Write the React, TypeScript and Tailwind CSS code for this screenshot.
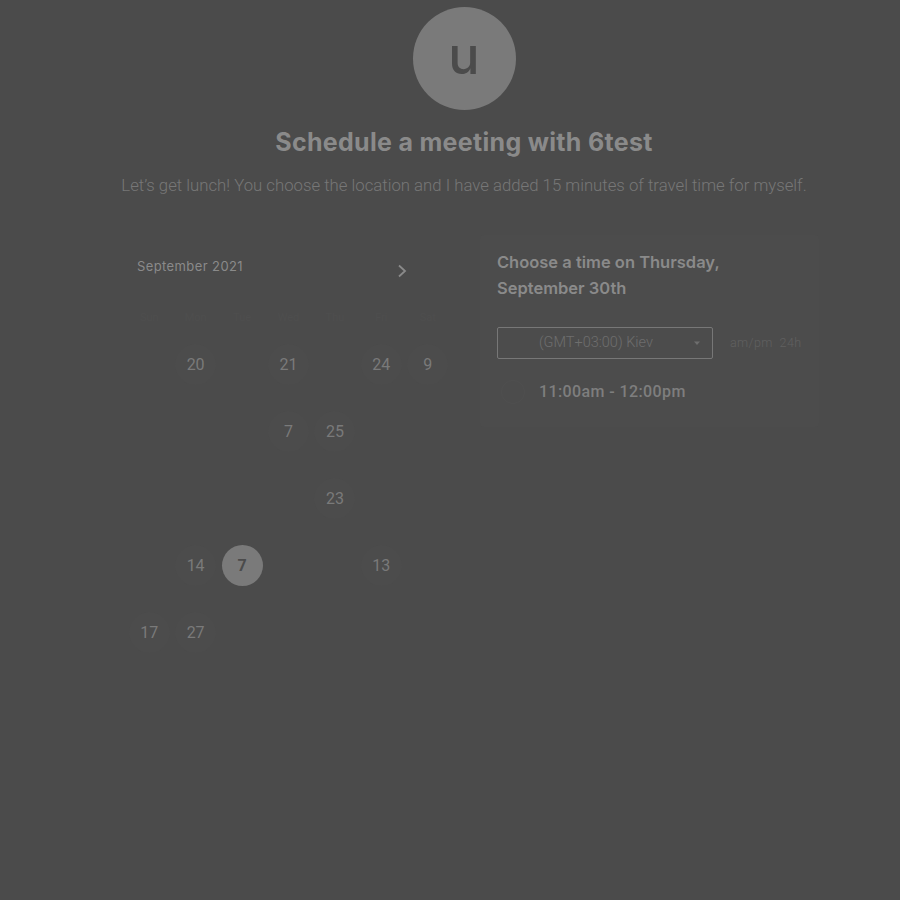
const cells: (string | null)[][] = [
  [null, "20", null, "21", null, "24", "9"],
  [null, null, null, "7", "25", null, null],
  [null, null, null, null, "23", null, null],
  [null, "14", "sel", null, null, "13", null],
  ["17", "27", null, null, null, null, null],
];

const days = ["Sun", "Mon", "Tue", "Wed", "Thu", "Fri", "Sat"];

const App = () => {
  return (
    <div className="min-h-[900px] w-full bg-[#4b4b4b] flex flex-col items-center pl-[28px] font-['Roboto',sans-serif]">
      <div className="mt-[7px] w-[103px] h-[103px] rounded-full bg-[#7a7a7a] flex items-center justify-center">
        <span className="text-[52px] font-medium leading-none -mt-[6px] text-[#4b4b4b] font-['Inter',sans-serif]">u</span>
      </div>
      <h1 className="mt-[16px] text-[25px] leading-[32px] font-bold tracking-[0.3px] text-[#8a8a8a] font-['Inter',sans-serif]">
        Schedule a meeting with 6test
      </h1>
      <p className="mt-[16px] text-[16.75px] leading-[22px] font-light text-[#777777]">
        Let’s get lunch! You choose the location and I have added 15 minutes of travel time for myself.
      </p>

      <div className="mt-[39px] w-[700px] flex ml-[10px]">
        {/* calendar */}
        <div className="w-[340px] pl-[7px] pt-[12px]">
          <div className="flex items-center justify-between w-[282px] pl-[11px] h-[40px]">
            <span className="text-[13px] text-[#8a8a8a] tracking-[0.4px] font-['Inter',sans-serif]">September 2021</span>
            <svg width="12" height="14" viewBox="0 0 12 14" className="mt-[8px]">
              <path d="M3 1.5 L9 7 L3 12.5" fill="none" stroke="#8a8a8a" strokeWidth="1.8" />
            </svg>
          </div>
          <div className="grid grid-cols-7 w-[325px] mt-[18px] h-[26px] items-center">
            {days.map((d) => (
              <span key={d} className="text-center text-[11px] text-[#4e4e4e]">
                {d}
              </span>
            ))}
          </div>
          {cells.map((row, i) => (
            <div key={i} className="grid grid-cols-7 w-[325px] h-[67px] items-center">
              {row.map((c, j) => (
                <div key={j} className="flex items-center justify-center">
                  {c === "sel" ? (
                    <div className="w-[41px] h-[41px] rounded-full bg-[#7a7a7a] flex items-center justify-center">
                      <span className="text-[16px] font-bold text-[#4b4b4b]">7</span>
                    </div>
                  ) : c ? (
                    <div className="w-[41px] h-[41px] rounded-full bg-[#4c4c4c] flex items-center justify-center">
                      <span className="text-[16px] text-[#7a7a7a]">{c}</span>
                    </div>
                  ) : null}
                </div>
              ))}
            </div>
          ))}
        </div>

        {/* time picker */}
        <div className="w-[340px] ml-[22px] bg-[#4c4c4c] rounded-[4px] px-[17px] pt-[14px] pb-[20px] self-start">
          <h2 className="text-[16.5px] leading-[26px] font-semibold text-[#8a8a8a] font-['Inter',sans-serif]">
            Choose a time on Thursday,
            <br />
            September 30th
          </h2>
          <div className="mt-[26px] flex items-center">
            <div className="relative w-[216px] h-[32px] border border-[#777777] rounded-[2px] flex items-center justify-center">
              <span className="text-[14.5px] font-light text-[#6e6e6e] -ml-[18px]">(GMT+03:00) Kiev</span>
              <svg width="8" height="5" viewBox="0 0 8 5" className="absolute right-[11px] top-[13px]">
                <path d="M1 0.5 L7 0.5 L4 4 Z" fill="#6e6e6e" />
              </svg>
            </div>
            <span className="ml-[17px] text-[12.5px] font-light text-[#606060] tracking-[0.4px]">am/pm&nbsp; 24h</span>
          </div>
          <div className="mt-[18px] flex items-center h-[30px]">
            <div className="w-[24px] h-[24px] rounded-full border border-[#4f4f4f] ml-[4px]" />
            <span className="ml-[14px] text-[16px] font-medium text-[#7e7e7e] tracking-[0.4px]">11:00am - 12:00pm</span>
          </div>
        </div>
      </div>
    </div>
  );
};

export default App;
